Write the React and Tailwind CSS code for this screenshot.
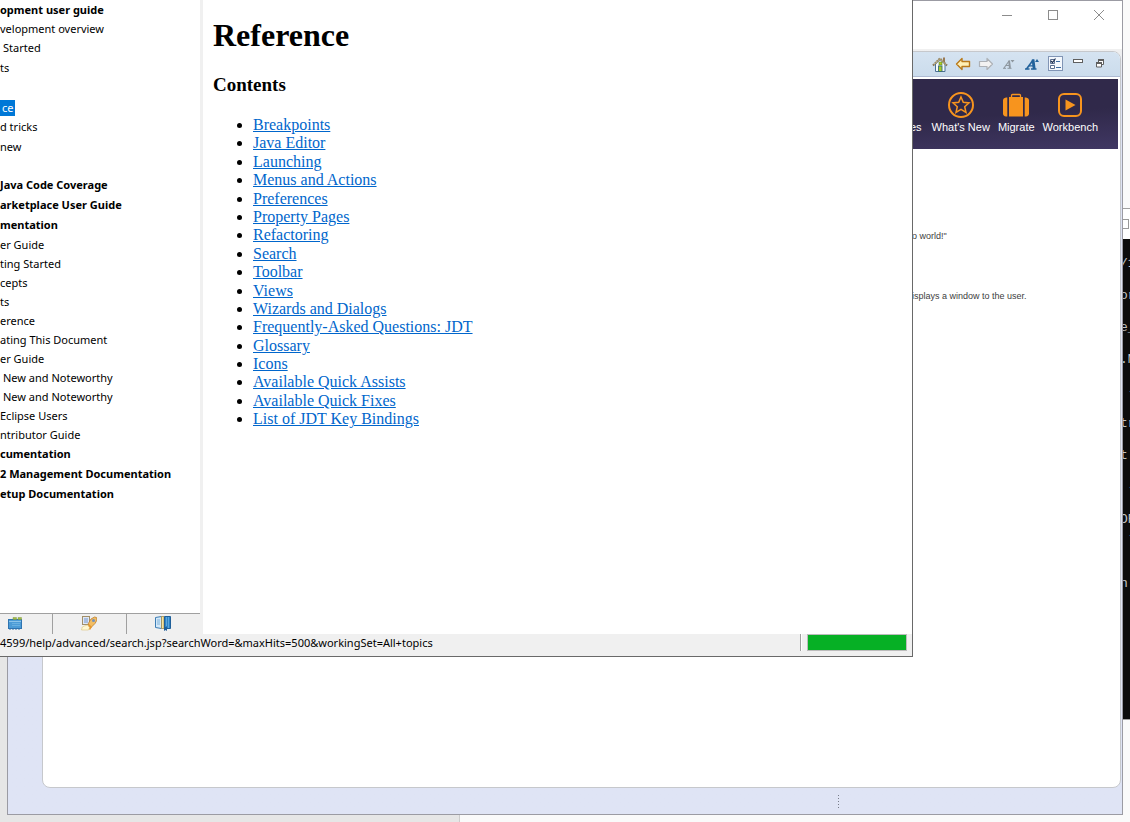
import React from "react";

const tree = [
  { t: "opment user guide", b: true, h: "h-[19px]" },
  { t: "velopment overview", h: "h-[19px]" },
  { t: "Started", h: "h-5", pad: "pl-[3px]" },
  { t: "ts", h: "h-5" },
  { t: "", h: "h-5" },
  { t: "ce", h: "h-[19px]", selected: true },
  { t: "d tricks", h: "h-5" },
  { t: "new", h: "h-[19px]" },
  { t: "", h: "h-[19px]" },
  { t: "Java Code Coverage", b: true, h: "h-5" },
  { t: "arketplace User Guide", b: true, h: "h-5" },
  { t: "mentation", b: true, h: "h-5" },
  { t: "er Guide", h: "h-[19px]" },
  { t: "ting Started", h: "h-[19px]" },
  { t: "cepts", h: "h-[19px]" },
  { t: "ts", h: "h-[19px]" },
  { t: "erence", h: "h-[19px]" },
  { t: "ating This Document", h: "h-[19px]" },
  { t: "er Guide", h: "h-[19px]" },
  { t: "New and Noteworthy", h: "h-[19px]", pad: "pl-[3px]" },
  { t: "New and Noteworthy", h: "h-[19px]", pad: "pl-[3px]" },
  { t: "Eclipse Users", h: "h-[19px]" },
  { t: "ntributor Guide", h: "h-[19px]" },
  { t: "cumentation", b: true, h: "h-5" },
  { t: "2 Management Documentation", b: true, h: "h-5" },
  { t: "etup Documentation", b: true, h: "h-5" },
];

const topics = [
  "Breakpoints",
  "Java Editor",
  "Launching",
  "Menus and Actions",
  "Preferences",
  "Property Pages",
  "Refactoring",
  "Search",
  "Toolbar",
  "Views",
  "Wizards and Dialogs",
  "Frequently-Asked Questions: JDT",
  "Glossary",
  "Icons",
  "Available Quick Assists",
  "Available Quick Fixes",
  "List of JDT Key Bindings",
];

const terminalLines = [
  "", "/1", "", "or", "", "e_", "", ".M", "", " -", "", "tr", "", "t.", "", " -", "", "OR", " -", "", "", "n",
];

function Svg({ size = 16, children, className = "" }) {
  return (
    <svg width={size} height={size} viewBox={`0 0 ${size} ${size}`} className={className} aria-hidden="true">
      {children}
    </svg>
  );
}

const HomeIcon = () => (
  <Svg>
    <path d="M11 1.5h2V6h-2z" fill="#9a7b55" />
    <path d="M3.5 8v7.5h9.5V8L8 3.5z" fill="#f6fafc" stroke="#4a7196" />
    <path d="M1 9.5L8 2.5l7 7" fill="none" stroke="#80704f" strokeWidth="2" strokeDasharray="2 .6" />
    <path d="M2 8.6L8 2.6l6 6" fill="none" stroke="#d8c08a" strokeWidth=".8" />
    <rect x="7" y="6" width="3" height="3" fill="#b6d11f" stroke="#547f37" strokeWidth=".6" />
    <rect x="6.5" y="10" width="3.5" height="5.5" fill="#a8cc28" stroke="#3d6d74" strokeWidth=".9" />
  </Svg>
);

const BackIcon = () => (
  <Svg>
    <path d="M7 2.5v3h7.5v5H7v3L1.500 8z" fill="#fff0b5" stroke="#b8791a" strokeWidth="1.4" strokeLinejoin="round" />
  </Svg>
);

const ForwardIcon = () => (
  <Svg>
    <path d="M9 2.5v3H1.500v5H9v3L14.500 8z" fill="#f2f2f2" stroke="#adb1b6" strokeWidth="1.2" strokeLinejoin="round" />
  </Svg>
);

const SmallerIcon = () => (
  <Svg>
    <path d="M3 12L8 5" fill="none" stroke="#8d969e" strokeWidth="1.100" />
    <path d="M8 4.500l1 7.500" stroke="#8d969e" strokeWidth="1.900" />
    <path d="M5 9.500h4M2 12.300h3M6.500 12.300h4" stroke="#8d969e" />
    <path d="M9.500 4h4l-2 2.500z" fill="#8d969e" />
  </Svg>
);

const LargerIcon = () => (
  <Svg>
    <path d="M2.500 13L9.500 3.500" fill="none" stroke="#22629b" strokeWidth="1.600" />
    <path d="M9 3.500l1.200 9.500" stroke="#22629b" strokeWidth="2.800" />
    <path d="M5 9.800h5M1 13h4.500M7 13h5.500" stroke="#22629b" strokeWidth="1.300" />
    <path d="M11 6h4l-2-3z" fill="#22629b" />
  </Svg>
);

const ChecklistIcon = () => (
  <Svg>
    <rect x="1.500" y=".5" width="14" height="14" fill="#f4f8fd" stroke="#8195b5" />
    <path d="M3.500 3.500h4v4h-4zM3.500 9.500h4v3h-4z" fill="#fff" stroke="#5b6f90" />
    <path d="M4 5l1.500 1.500L8.500 2.500" fill="none" stroke="#1d2f50" strokeWidth="1.200" />
    <path d="M9 5.500h4M9 11.500h5" stroke="#3f6da3" />
  </Svg>
);

const PaneMinIcon = () => (
  <Svg>
    <rect x="3.500" y="3.500" width="9" height="3" fill="#fff" stroke="#5f5f5f" />
  </Svg>
);

const PaneRestoreIcon = () => (
  <Svg>
    <path d="M5.500 4h5v4.500h-5z" fill="#fff" stroke="#5f5f5f" />
    <path d="M5 4h6" stroke="#5f5f5f" strokeWidth="2" />
    <path d="M3.500 7h5v4h-5z" fill="#fff" stroke="#5f5f5f" />
    <path d="M3 7h6" stroke="#5f5f5f" strokeWidth="2" />
  </Svg>
);

const StarIcon = () => (
  <Svg size={28}>
    <circle cx="14" cy="14" r="12" fill="none" stroke="#f7941e" strokeWidth="2" />
    <path
      d="M14 6l2.300 5.300 5.700.6-4.300 3.800 1.300 5.700-5-3-5 3 1.300-5.700L6 11.900l5.700-.6z"
      fill="none"
      stroke="#f7941e"
      strokeWidth="1.500"
    />
  </Svg>
);

const SuitcaseIcon = () => (
  <Svg size={28}>
    <path d="M9.500 6V4.500q0-1 1-1h7q1 0 1 1V6" fill="none" stroke="#f7941e" strokeWidth="1.300" />
    <path d="M7 6h14v19.500H7z" fill="#f7941e" />
    <path d="M5.300 6.500H4q-3 .5-3 3V22.500q0 2.500 3 3h1.300zM22.700 6.500H24q3 .5 3 3V22.500q0 2.500-3 3h-1.300z" fill="#f7941e" />
  </Svg>
);

const PlayIcon = () => (
  <Svg size={28}>
    <rect x="3" y="3" width="22" height="22" rx="5" fill="none" stroke="#f7941e" strokeWidth="2" />
    <path d="M9.500 8.500L19.500 14l-10 5.500z" fill="#f7941e" />
  </Svg>
);

const ContentsTabIcon = () => (
  <Svg>
    <path d="M3 15V4M6 15v-2M9 15v-2M12 15v-2" stroke="#2f74b0" />
    <rect x="1.500" y="4.500" width="13" height="9" fill="#4b9bd6" stroke="#2f74b0" />
    <path d="M2 6.500h12" stroke="#8cc4ea" />
    <path d="M5 8.500h8M5 10.500h8" stroke="#69b0e0" />
    <path d="M6 2.500h3.500v2H6zM11 2.500h3.500v2H11z" fill="#a5bd3d" stroke="#7f9a4a" strokeWidth=".5" />
  </Svg>
);

const SearchTabIcon = () => (
  <Svg>
    <rect x="1.500" y="1.500" width="7" height="8" fill="#dfe8f6" stroke="#a28f69" />
    <path d="M3 3h4v5H3z" fill="#a9bedf" />
    <path d="M7 9l3-5 3.500-2 2 .5.5 2.500-2 3.500-4 4z" fill="#f2bd63" stroke="#ba7d2e" strokeWidth=".8" />
    <circle cx="12.500" cy="5.500" r="1.500" fill="#6f8fc0" />
    <path d="M8 9l3 3-2 3-3-3z" fill="#e7962c" />
    <path d="M.5 15q0-4 3-4l3-1 2 2.500-1 2.500z" fill="#fff8d2" stroke="#dcc27b" strokeWidth=".6" />
  </Svg>
);

const BookTabIcon = () => (
  <Svg>
    <path d="M.5 2.500l6-1v12l-6-1z" fill="#d3e8f8" stroke="#3c7db5" />
    <path d="M2 5h3M2 7h3M2 9h3" stroke="#7fb2da" />
    <path d="M6.500 1.500h2.500v12h-2.500z" fill="#f6e3a0" stroke="#a58d4c" strokeWidth=".8" />
    <path d="M9.500 1.500h6v12h-6z" fill="#2d82c5" stroke="#1f5f99" />
    <path d="M11.500 2v9M13.500 2v11" stroke="#5ba6de" />
    <path d="M9 12h3v4l-1.500-1L9 16z" fill="#1f5f99" />
  </Svg>
);

const toolbar = [
  ["Home", HomeIcon],
  ["Back", BackIcon],
  ["Forward", ForwardIcon],
  ["Reduce font size", SmallerIcon],
  ["Magnify font size", LargerIcon],
  ["Customize page", ChecklistIcon],
  ["Minimize", PaneMinIcon],
  ["Restore", PaneRestoreIcon],
];

function TerminalWindow() {
  return (
    <section
      aria-label="Terminal"
      className="absolute top-52 right-0 w-[10px] h-[512px] overflow-hidden border-t border-b border-[#a0a0a0] bg-[#0c0c0c]"
    >
      <div className="flex h-[30px] items-center bg-white">
        <div className="h-[10px] w-[9px] border border-[#999]" />
      </div>
      <div className="pt-px font-['Liberation_Mono',monospace] text-[13px] leading-4 text-[#c4c4c4]">
        {terminalLines.map((line, i) => (
          <div key={i} className="h-4 whitespace-pre">{line}</div>
        ))}
      </div>
    </section>
  );
}

function EclipseWindow() {
  return (
    <section
      aria-label="Eclipse"
      className="absolute top-0 right-[7px] bottom-[7px] left-[7px] flex flex-col border border-[#9b9ba3] bg-[#dfe4f5]"
    >
      <header className="flex h-12 justify-end bg-white">
        <div className="flex h-7 items-center gap-[30px] pr-[15px]">
          <button aria-label="Minimize window" className="block">
            <Svg><path d="M3 8.500h10" stroke="#8c8c8c" /></Svg>
          </button>
          <button aria-label="Maximize window" className="block">
            <Svg><rect x="3.500" y="3.500" width="9" height="9" fill="none" stroke="#8c8c8c" /></Svg>
          </button>
          <button aria-label="Close window" className="block">
            <Svg><path d="M3 3l10 10M13 3L3 13" stroke="#8c8c8c" /></Svg>
          </button>
        </div>
      </header>
      <div className="flex grow flex-col bg-gradient-to-b from-[#f0f0f0] from-0% to-[#dfe4f5] to-5% pt-[2px] pr-px pb-[26px] pl-[34px]">
        <div className="flex grow flex-col overflow-hidden rounded-tr-lg rounded-b-lg border border-[#c6c8cc] bg-white">
          <div
            role="toolbar"
            className="flex h-[25px] items-center justify-end gap-[7px] border-b border-[#aebbd3] bg-gradient-to-b from-[#d5e3f1] to-[#cbdcec] pr-[11px]"
          >
            {toolbar.map(([label, Icon]) => (
              <button key={label} aria-label={label} title={label} className="block">
                <Icon />
              </button>
            ))}
          </div>
          <nav className="mt-[2px] mr-[2px] flex h-[70px] items-start justify-end gap-2 bg-gradient-to-br from-[#30294a] from-70% to-[#403763] pt-3 pr-5 font-['Liberation_Sans',sans-serif] text-[11px] leading-4 text-white">
            <a href="#samples" className="pt-7 pr-[2px]">es</a>
            {[
              ["What's New", StarIcon],
              ["Migrate", SuitcaseIcon],
              ["Workbench", PlayIcon],
            ].map(([label, Icon]) => (
              <a key={label} href="#welcome" className="flex flex-col items-center">
                <Icon />
                {label}
              </a>
            ))}
          </nav>
          <div className="flex w-[210px] flex-col gap-12 self-end pt-[81px] font-['Liberation_Sans',sans-serif] text-[9px] leading-3 text-[#404040]">
            <p>lo world!"</p>
            <p className="pl-[2px]">isplays a window to the user.</p>
          </div>
        </div>
      </div>
      <div className="absolute right-[283px] bottom-[6px] flex flex-col gap-[2px]">
        {[0, 1, 2, 3, 4].map((i) => (
          <span key={i} className="block size-px bg-[#777b88]" />
        ))}
      </div>
    </section>
  );
}

function HelpWindow() {
  return (
    <section
      aria-label="Help"
      className="absolute top-0 right-[217px] bottom-[165px] left-0 flex flex-col border-r border-b border-[#696969] bg-[#f0f0f0]"
    >
      <div className="flex grow">
        <aside className="flex w-[200px] flex-col bg-white">
          <ul className="grow font-['Noto_Sans','Open_Sans',sans-serif] text-[11px] leading-4 text-black">
            {tree.map((item, i) => (
              <li key={i} className={`flex items-center overflow-hidden whitespace-nowrap ${item.h} ${item.pad || ""}`}>
                {item.t && (
                  <a
                    href="#topic"
                    className={
                      item.selected ? "bg-[#0078d7] px-[2px] text-white" : item.b ? "font-bold" : ""
                    }
                  >
                    {item.t}
                  </a>
                )}
              </li>
            ))}
          </ul>
          <div className="flex h-[21px] border-t border-[#a0a0a0] bg-[#f0f0f0]">
            <button aria-label="Contents" className="flex w-[53px] items-start border-r border-[#a0a0a0] pt-px pl-[7px]">
              <ContentsTabIcon />
            </button>
            <button aria-label="Search" className="flex w-[74px] items-start border-r border-[#a0a0a0] pt-px pl-7">
              <SearchTabIcon />
            </button>
            <button aria-label="Bookmarks" className="flex grow items-start pt-px pl-7">
              <BookTabIcon />
            </button>
          </div>
        </aside>
        <main className="ml-[3px] grow bg-white pt-[17px] pl-[10px] font-['Liberation_Serif',serif] text-black">
          <h1 className="text-[32px] leading-9 font-bold">Reference</h1>
          <h2 className="mt-[21px] text-[19px] leading-[22px] font-bold">Contents</h2>
          <ul className="mt-5 list-disc pl-10 text-[16px] leading-[1.15]">
            {topics.map((t) => (
              <li key={t}>
                <a href="#topic" className="text-[#0066cc] underline">{t}</a>
              </li>
            ))}
          </ul>
        </main>
      </div>
      <footer className="flex h-[22px] items-start gap-[5px] pr-[5px]">
        <p className="grow font-['Noto_Sans','Open_Sans',sans-serif] text-[11px] leading-[18px] whitespace-nowrap text-black">
          4599/help/advanced/search.jsp?searchWord=&amp;maxHits=500&amp;workingSet=All+topics
        </p>
        <div className="h-[17px] w-[2px] border-l border-[#a0a0a0] bg-white" />
        <div
          role="progressbar"
          aria-label="Loading"
          aria-valuenow={100}
          className="h-[17px] w-[100px] border border-[#bcbcbc] bg-[#06b025]"
        />
      </footer>
    </section>
  );
}

export default function App() {
  return (
    <div className="relative flex h-screen overflow-hidden bg-[#fafafa]">
      <div className="w-[460px] border-r border-[#cccccc] bg-[#e6e6e6]" />
      <TerminalWindow />
      <EclipseWindow />
      <HelpWindow />
    </div>
  );
}
